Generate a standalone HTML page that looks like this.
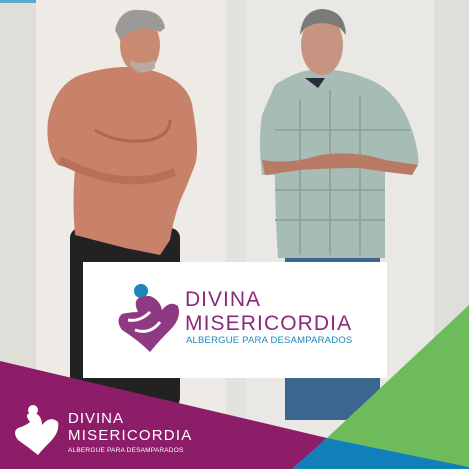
<!DOCTYPE html>
<html><head><style>
html,body{margin:0;padding:0;width:469px;height:469px;overflow:hidden;background:#e2e0dc}
svg{display:block}
text{font-family:"Liberation Sans",sans-serif}
</style></head><body>
<svg width="469" height="469" viewBox="0 0 469 469" xmlns="http://www.w3.org/2000/svg">
<rect width="469" height="469" fill="#e0ded9"/>
<rect x="36" y="0" width="190" height="469" fill="#eeebe6"/>
<rect x="226" y="0" width="20" height="469" fill="#e4e2de"/>
<rect x="246" y="0" width="188" height="469" fill="#eae8e4"/>
<rect x="0" y="0" width="36" height="3" fill="#5aaad0"/>
<!-- left man -->
<rect x="70" y="228" width="110" height="180" fill="#222" rx="10"/>
<path d="M80 75 Q120 62 150 70 Q190 80 193 110 Q200 150 195 165 L185 190 Q175 210 170 240 L160 255 L125 248 L75 235 Q72 200 75 170 L58 165 Q45 150 48 120 Q55 85 80 75Z" fill="#c9826a"/>
<path d="M95 130 Q120 145 150 140 Q170 135 170 120" stroke="#b0664f" stroke-width="3" fill="none"/>
<path d="M60 160 Q95 178 125 180 Q150 182 175 172" stroke="#b87058" stroke-width="8" fill="none"/>
<ellipse cx="140" cy="45" rx="20" ry="28" fill="#c98a72"/>
<path d="M115 30 Q120 8 140 10 Q162 10 165 28 L160 32 Q140 22 120 40Z" fill="#9c9a96"/>
<path d="M130 65 Q140 78 155 68 L155 60 Q140 66 130 60Z" fill="#b8aaa0"/>
<!-- right man -->
<rect x="285" y="250" width="95" height="170" fill="#3b6690"/>
<path d="M275 85 Q300 68 320 70 Q345 68 375 82 Q400 95 412 130 Q420 155 418 165 L385 168 Q385 210 385 258 L278 258 Q275 210 275 175 L262 175 Q258 140 262 115Z" fill="#a6bcb4"/>
<path d="M300 100 L300 255 M330 90 L330 255 M360 95 L360 255 M275 130 L410 130 M275 190 L385 190 M275 220 L385 220" stroke="#8ea69e" stroke-width="2"/>
<path d="M262 160 Q290 165 320 155 Q355 150 385 160 L418 165 L412 175 Q385 172 360 168 Q330 168 300 170 L265 175Z" fill="#b87a64"/>
<ellipse cx="322" cy="45" rx="21" ry="30" fill="#c69480"/>
<path d="M300 35 Q302 10 322 9 Q345 10 346 35 L340 28 Q322 18 305 28Z" fill="#7b7a78"/>
<path d="M305 78 L318 88 L325 78Z" fill="#2a2e3a"/>
<!-- shapes -->
<polygon points="469,305 469,467 327,438" fill="#6dbb5b"/>
<polygon points="327,438 469,467 469,469 292,469" fill="#1180b8"/>
<polygon points="0,361 327,438 292,469 0,469" fill="#8d1c69"/>
<!-- white box -->
<rect x="83" y="262" width="304" height="116" fill="#fff"/>
<circle cx="141" cy="291" r="7" fill="#1d86b9"/>
<path d="M138 312 Q130 295 150 296 Q160 300 162 310 Q170 300 178 306 Q182 318 170 330 Q158 342 150 352 Q138 340 122 330 Q115 320 122 314 Q130 312 138 312Z" fill="#8e3a82"/>
<path d="M128 320 Q140 322 150 312 M135 330 Q150 335 160 322" stroke="#fff" stroke-width="3" fill="none"/>
<text x="185" y="306" font-size="21" fill="#8b2a7a" letter-spacing="1">DIVINA</text>
<text x="185" y="330" font-size="21" fill="#8b2a7a" letter-spacing="1.1">MISERICORDIA</text>
<text x="186" y="343" font-size="9.5" fill="#2086bf" letter-spacing="0.2">ALBERGUE PARA DESAMPARADOS</text>
<!-- bottom logo -->
<circle cx="33" cy="410" r="5" fill="#fff"/>
<path d="M30 422 Q22 412 35 413 Q42 416 42 425 Q50 415 58 422 Q60 432 50 442 Q42 450 38 455 Q28 447 18 440 Q12 432 18 428 Q25 426 30 422Z" fill="#fff"/>
<text x="68" y="423" font-size="15" fill="#fff" letter-spacing="1">DIVINA</text>
<text x="68" y="440" font-size="15" fill="#fff" letter-spacing="1.2">MISERICORDIA</text>
<text x="68" y="452" font-size="6.5" fill="#fff" letter-spacing="0.2">ALBERGUE PARA DESAMPARADOS</text>
</svg>
</body></html>
